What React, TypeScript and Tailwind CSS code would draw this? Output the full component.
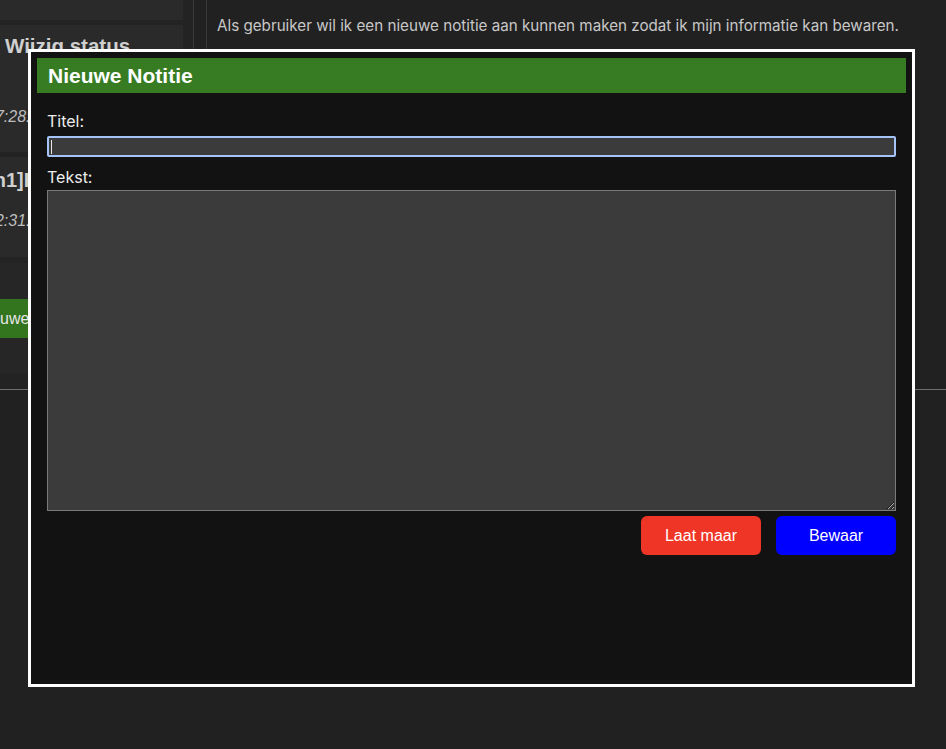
import React from "react";

export default function App() {
  return (
    <div
      className="relative h-[749px] w-[946px] overflow-hidden bg-[#212121]"
      style={{ fontFamily: "Inter, 'Liberation Sans', sans-serif" }}
    >
      {/* background page */}
      <div className="flex h-[390px] border-b border-[#6f6f6f]">
        <div className="flex w-[194px] flex-col overflow-hidden border-r border-[#3a3a3a] bg-[#232323] pr-[10px]">
          <div className="h-[20px] shrink-0 bg-[#2a2a2a]" />
          <div className="mt-[5px] h-[127px] shrink-0 bg-[#2a2a2a] pl-[5px] pt-[9px]">
            <div className="whitespace-nowrap text-[20.5px] font-bold leading-[24px] text-[#cfcfcf]" style={{ fontFamily: "'Liberation Sans', Arial, sans-serif" }}>
              Wijzig status
            </div>
            <div className="-ml-[19px] mt-[49px] whitespace-nowrap text-[16px] italic leading-[20px] text-[#bdbdbd]" style={{ fontFamily: "'Liberation Sans', Arial, sans-serif" }}>
              17:28:45
            </div>
          </div>
          <div className="mt-[5px] h-[100px] shrink-0 bg-[#2a2a2a] pt-[11px]">
            <div className="-ml-[13px] whitespace-nowrap text-[20px] font-bold leading-[24px] text-[#cfcfcf]" style={{ fontFamily: "'Liberation Sans', Arial, sans-serif" }}>
              [h1]Hallo
            </div>
            <div className="-ml-[14px] mt-[19px] whitespace-nowrap text-[16px] italic leading-[20px] text-[#bdbdbd]" style={{ fontFamily: "'Liberation Sans', Arial, sans-serif" }}>
              12:31:05
            </div>
          </div>
          <div className="mt-[6px] h-[111px] shrink-0 bg-[#262626] pt-[36px]">
            <div
              className="-ml-[36px] flex h-[39px] w-[160px] items-center whitespace-nowrap bg-[#33741f] pl-[12px] text-[16px] text-[#e6e6e6]"
              style={{ fontFamily: "'Liberation Sans', Arial, sans-serif" }}
            >
              Nieuwe notitie
            </div>
          </div>
        </div>
        <div className="w-[12px] shrink-0" />
        <div className="flex-1 border-l border-[#3a3a3a] pl-[10px] pt-[16px]">
          <p className="whitespace-nowrap text-[15.2px] leading-[20px] text-[#c8c8c8]">
            Als gebruiker wil ik een nieuwe notitie aan kunnen maken zodat ik mijn informatie kan bewaren.
          </p>
        </div>
      </div>

      {/* modal */}
      <div className="absolute left-[28px] top-[49px] flex h-[638px] w-[887px] flex-col border-[3px] border-white bg-[#121212] p-[6px]">
        <div
          className="flex h-[35px] items-center bg-[#377c22] px-[11px] text-[21px] font-bold text-white"
          style={{ fontFamily: "'Liberation Sans', Arial, sans-serif" }}
        >
          Nieuwe Notitie
        </div>
        <div className="flex flex-col px-[10px] pt-[16px]">
          <label className="text-[16px] leading-[24px] text-[#ececec]">Titel:</label>
          <div className="mt-[3px] flex h-[21px] items-center rounded-[2px] border-2 border-[#a4c4f7] bg-[#3b3b3b] pl-[2px]">
            <div className="h-[14px] w-[1px] bg-[#e8e8e8]" />
          </div>
          <label className="mt-[8px] text-[16px] leading-[24px] text-[#ececec]">Tekst:</label>
          <textarea
            readOnly
            className="mt-px block h-[321px] w-full resize-y border border-[#7a7a7a] bg-[#3b3b3b] outline-none"
          />
          <div className="mt-[5px] flex justify-end gap-[15px]" style={{ fontFamily: "'Liberation Sans', Arial, sans-serif" }}>
            <button className="h-[39px] w-[120px] rounded-[6px] bg-[#ee3526] text-[16px] text-white">Laat maar</button>
            <button className="h-[39px] w-[120px] rounded-[6px] bg-[#0000ff] text-[16px] text-white">Bewaar</button>
          </div>
        </div>
      </div>
    </div>
  );
}
